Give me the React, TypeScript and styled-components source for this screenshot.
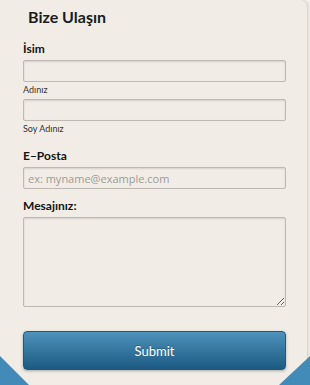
import styled, { createGlobalStyle } from "styled-components";

const GlobalStyle = createGlobalStyle`
  * {
    box-sizing: border-box;
  }
  body {
    margin: 0;
    background: #f4f2ee;
    font-family: "Lato", "Noto Sans", sans-serif;
  }
`;

const Page = styled.div`
  position: relative;
  width: 310px;
  height: 385px;
  overflow: hidden;

  &::before,
  &::after {
    content: "";
    position: absolute;
    bottom: 0;
    width: 0;
    height: 0;
    border-top: 29px solid transparent;
  }
  &::before {
    left: 0;
    border-left: 29px solid #428ab8;
  }
  &::after {
    right: 0;
    border-right: 31px solid #428ab8;
  }
`;

const Card = styled.form`
  width: 307px;
  height: 385px;
  padding: 7px 21px 0 23px;
  background: #f1ede6;
  border-top-right-radius: 7px;
  box-shadow: 1px 0 3px rgba(0, 0, 0, 0.18);
  display: flex;
  flex-direction: column;
`;

const Title = styled.h3`
  margin: 0 0 14px 5px;
  font-size: 16px;
  line-height: 20px;
  font-weight: 700;
  color: #1b1b1b;
`;

const Field = styled.div<{ $gap: number }>`
  display: flex;
  flex-direction: column;
  margin-bottom: ${(p) => p.$gap}px;
`;

const Label = styled.label`
  font-size: 12px;
  line-height: 15px;
  font-weight: 700;
  color: #141414;
  margin-bottom: 4px;
`;

const SubLabel = styled.span`
  font-size: 9px;
  line-height: 11px;
  color: #333;
  margin-top: 2px;
`;

const Input = styled.input`
  width: 263px;
  height: 22px;
  margin: 0;
  padding: 0 4px;
  background: #f1ede6;
  border: 1px solid #bdb9b1;
  border-radius: 2px;
  box-shadow: inset 0 1px 2px rgba(0, 0, 0, 0.12);
  font-family: "Open Sans", "Liberation Sans", sans-serif;
  font-size: 11px;
  color: #444;
  outline: none;

  &::placeholder {
    color: #9c9a97;
  }
`;

const TextArea = styled.textarea`
  width: 263px;
  height: 90px;
  margin: 0;
  padding: 4px 5px;
  background: #f1ede6;
  border: 1px solid #bdb9b1;
  border-radius: 2px;
  box-shadow: inset 0 1px 2px rgba(0, 0, 0, 0.12);
  outline: none;
  font-family: "Open Sans", "Liberation Sans", sans-serif;
  font-size: 11px;
`;

const SubmitButton = styled.button`
  width: 263px;
  height: 39px;
  margin-top: 24px;
  padding: 0;
  border: 1px solid #1d5a80;
  border-radius: 4px;
  background: linear-gradient(to bottom, #4d92bb, #1c5a82);
  box-shadow: 0 1px 3px rgba(0, 0, 0, 0.3);
  color: #fff;
  font-family: "Lato", "Noto Sans", sans-serif;
  font-size: 13px;
  text-shadow: 0 -1px 0 rgba(0, 0, 0, 0.25);
  cursor: pointer;
`;

function App() {
  return (
    <>
      <GlobalStyle />
      <Page>
        <Card onSubmit={(e) => e.preventDefault()}>
          <Title>Bize Ulaşın</Title>
          <Field $gap={4}>
            <Label>İsim</Label>
            <Input type="text" />
            <SubLabel>Adınız</SubLabel>
          </Field>
          <Field $gap={14}>
            <Input type="text" />
            <SubLabel>Soy Adınız</SubLabel>
          </Field>
          <Field $gap={9}>
            <Label>E–Posta</Label>
            <Input type="email" placeholder="ex: myname@example.com" />
          </Field>
          <Field $gap={0}>
            <Label>Mesajınız:</Label>
            <TextArea />
          </Field>
          <SubmitButton type="submit">Submit</SubmitButton>
        </Card>
      </Page>
    </>
  );
}

export default App;
